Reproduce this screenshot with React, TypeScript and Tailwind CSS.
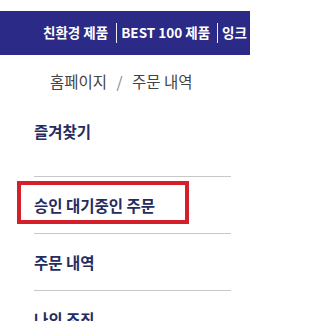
import React from 'react';

const menu = [
  { label: '즐겨찾기', first: true },
  { label: '승인 대기중인 주문' },
  { label: '주문 내역' },
  { label: '나의 조직' },
];

export default function App() {
  return (
    <div
      className="relative w-[250px] h-[321px] overflow-hidden bg-white"
      style={{ fontFamily: '"Noto Sans CJK KR", "Noto Sans", sans-serif' }}
    >
      {/* Top nav */}
      <div className="mt-[11px] h-[44px] bg-[#2b2a86] flex items-center pl-[43px] whitespace-nowrap overflow-hidden text-white text-[13.5px] font-bold leading-none">
        <span>친환경 제품</span>
        <span className="ml-[8px] pl-[4px] border-l border-white/90 h-[20px] flex items-center">BEST 100 제품</span>
        <span className="ml-[7px] pl-[4px] border-l border-white/90 h-[20px] flex items-center">잉크</span>
      </div>

      {/* Breadcrumb */}
      <div className="mt-[15px] pl-[50px] text-[15.5px] text-[#444] leading-[22px] whitespace-nowrap">
        홈페이지 <span className="mx-[6px] text-[#888]">/</span> 주문 내역
      </div>

      {/* Side menu */}
      <ul className="mt-[27px] ml-[34px] w-[197px]">
        {menu.map((item) => (
          <li
            key={item.label}
            className={
              item.first
                ? 'h-[57px] pt-[1px] text-[15.5px] font-bold text-[#272c5e] leading-[22px] whitespace-nowrap'
                : 'h-[57px] border-t border-[#c8c8c8] flex items-center text-[15.5px] font-bold text-[#272c5e] leading-[22px] whitespace-nowrap'
            }
          >
            {item.label}
          </li>
        ))}
      </ul>

      {/* Highlight annotation */}
      <div className="absolute left-[17px] top-[181px] w-[172px] h-[43px] border-4 border-[#d3202a]" />
    </div>
  );
}
